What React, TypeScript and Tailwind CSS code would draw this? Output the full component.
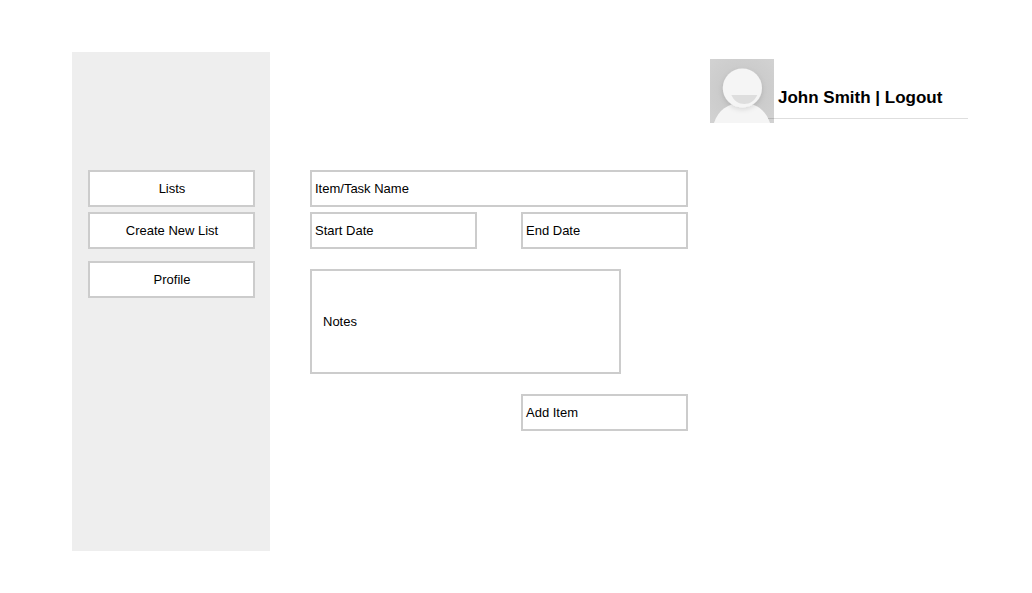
import type { ReactNode } from "react";

function Box({ children, className = "" }: { children: ReactNode; className?: string }) {
  return (
    <div className={`flex items-center border-2 border-[#cccccc] bg-white ${className}`}>
      {children}
    </div>
  );
}

function Avatar() {
  return (
    <svg className="block h-16 w-16 shrink-0" viewBox="0 0 64 64" aria-hidden="true">
      <defs>
        <radialGradient id="backdrop" cx="50%" cy="50%" r="70%">
          <stop offset="0.4" stopColor="#cacaca" />
          <stop offset="1" stopColor="#d2d2d2" />
        </radialGradient>
        <filter id="shade" x="-30%" y="-30%" width="160%" height="160%">
          <feDropShadow dx="0" dy="2" stdDeviation="2.5" floodColor="#000" floodOpacity="0.12" />
        </filter>
      </defs>
      <rect width="64" height="64" fill="url(#backdrop)" />
      <path d="M4 64C8 51 18 44 32 44s24 7 28 20z" fill="#f5f5f5" />
      <circle cx="32.4" cy="29" r="19.6" fill="#f5f5f5" filter="url(#shade)" />
      <path d="M21.3 36h26C44.500 42 40 45 34.300 45S24.100 42 21.300 36z" fill="#dedede" />
    </svg>
  );
}

export default function App() {
  return (
    <div className="flex h-[593px] w-[1032px] items-start overflow-hidden bg-white pt-[52px] pl-[72px] font-['Liberation_Sans',Arial,sans-serif] text-[13px] leading-[15px] text-black">
      <aside className="h-[499px] w-[198px] shrink-0 bg-[#eeeeee] pt-[118px] pl-4">
        <nav className="flex w-[167px] flex-col">
          <Box className="h-[37px] justify-center pl-px">Lists</Box>
          <Box className="mt-[5px] h-[37px] justify-center pl-px">Create New List</Box>
          <Box className="mt-3 h-[37px] justify-center pl-px">Profile</Box>
        </nav>
      </aside>

      <main className="mt-[118px] ml-10 flex w-[378px] shrink-0 flex-col">
        <Box className="h-[37px] pl-[3px]">Item/Task Name</Box>
        <div className="mt-[5px] flex justify-between">
          <Box className="h-[37px] w-[167px] pl-[3px]">Start Date</Box>
          <Box className="h-[37px] w-[167px] pl-[3px]">End Date</Box>
        </div>
        <Box className="mt-5 h-[105px] w-[311px] pl-[11px]">Notes</Box>
        <Box className="mt-5 h-[37px] w-[167px] self-end pl-[3px]">Add Item</Box>
      </main>

      <header className="relative mt-[7px] ml-[22px] flex h-16 w-[258px] items-start">
        <Avatar />
        <div className="mt-[29px] ml-1 text-[17px] leading-[20px] font-bold whitespace-nowrap">
          John Smith | Logout
        </div>
        <div className="absolute top-[59px] left-[58px] h-px w-[200px] bg-black/13" />
      </header>
    </div>
  );
}
